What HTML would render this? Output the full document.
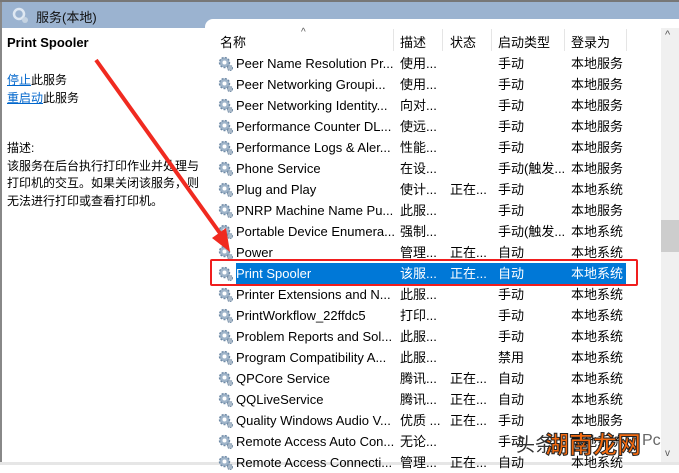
<!DOCTYPE html>
<html><head><meta charset="utf-8"><style>
*{margin:0;padding:0;box-sizing:border-box}
body{width:679px;height:465px;position:relative;overflow:hidden;background:#fff;font-family:"Liberation Sans","Noto Sans CJK SC",sans-serif;font-size:13px;color:#000}
.a{position:absolute;white-space:nowrap}
.row{position:absolute;left:210px;width:451px;height:21px;line-height:21px}
.row span{position:absolute;top:0}
.ic{position:absolute;left:8px;top:3px;width:15px;height:15px}
.c1{left:26px}.c2{left:190px}.c3{left:240px}.c4{left:288px}.c5{left:361px}
.sel{background:#0078d7;color:#fff}
</style></head><body>
<div class="a" style="left:0;top:0;width:679px;height:2px;background:#777"></div>
<div class="a" style="left:0;top:2px;width:679px;height:26px;background:#9bb3d0"></div>
<div class="a" style="left:0;top:2px;width:2px;height:463px;background:#888"></div>
<div class="a" style="left:2px;top:28px;width:203px;height:435px;background:#fff"></div>
<div class="a" style="left:205px;top:19px;width:474px;height:446px;background:#fff;border-top-left-radius:8px"></div>
<div class="a" style="left:0;top:462px;width:679px;height:3px;background:#e6e6e6"></div>
<svg class="a" style="left:12px;top:7px" width="18" height="18" viewBox="0 0 18 18"><circle cx="7" cy="7" r="5" fill="none" stroke="#dfe8f2" stroke-width="2.5"/><circle cx="13" cy="13" r="3" fill="#c5d3e2"/></svg>
<div class="a" style="left:36px;top:7px;font-size:13px;color:#111">服务(本地)</div>
<div class="a" style="left:7px;top:35px;font-weight:bold;font-size:13px">Print Spooler</div>
<div class="a" style="left:7px;top:71px;font-size:12px"><span style="color:#0066cc;text-decoration:underline">停止</span>此服务</div>
<div class="a" style="left:7px;top:89px;font-size:12px"><span style="color:#0066cc;text-decoration:underline">重启动</span>此服务</div>
<div class="a" style="left:7px;top:140px;font-size:12px;line-height:17.5px">描述:<br>该服务在后台执行打印作业并处理与<br>打印机的交互。如果关闭该服务，则<br>无法进行打印或查看打印机。</div>
<div class="a" style="left:220px;top:32px">名称</div>
<div class="a" style="left:301px;top:27px;font-size:10px;color:#555">^</div>
<div class="a" style="left:400px;top:32px">描述</div>
<div class="a" style="left:450px;top:32px">状态</div>
<div class="a" style="left:498px;top:32px">启动类型</div>
<div class="a" style="left:571px;top:32px">登录为</div>
<div class="a" style="left:393px;top:29px;width:1px;height:22px;background:#e5e5e5"></div>
<div class="a" style="left:442px;top:29px;width:1px;height:22px;background:#e5e5e5"></div>
<div class="a" style="left:491px;top:29px;width:1px;height:22px;background:#e5e5e5"></div>
<div class="a" style="left:564px;top:29px;width:1px;height:22px;background:#e5e5e5"></div>
<div class="a" style="left:626px;top:29px;width:1px;height:22px;background:#e5e5e5"></div>
<div class="a" style="left:661px;top:28px;width:18px;height:434px;background:#f0f0f0"></div>
<div class="a" style="left:661px;top:220px;width:18px;height:32px;background:#cdcdcd"></div>
<div class="a" style="left:665px;top:29px;font-size:11px;color:#555">^</div>
<div class="a" style="left:665px;top:448px;font-size:10px;color:#555">v</div>
<div id="rows"></div>
<script>
var d=[["Peer Name Resolution Pr...","使用...","","手动","本地服务"],["Peer Networking Groupi...","使用...","","手动","本地服务"],["Peer Networking Identity...","向对...","","手动","本地服务"],["Performance Counter DL...","使远...","","手动","本地服务"],["Performance Logs & Aler...","性能...","","手动","本地服务"],["Phone Service","在设...","","手动(触发...","本地服务"],["Plug and Play","使计...","正在...","手动","本地系统"],["PNRP Machine Name Pu...","此服...","","手动","本地服务"],["Portable Device Enumera...","强制...","","手动(触发...","本地系统"],["Power","管理...","正在...","自动","本地系统"],["Print Spooler","该服...","正在...","自动","本地系统"],["Printer Extensions and N...","此服...","","手动","本地系统"],["PrintWorkflow_22ffdc5","打印...","","手动","本地系统"],["Problem Reports and Sol...","此服...","","手动","本地系统"],["Program Compatibility A...","此服...","","禁用","本地系统"],["QPCore Service","腾讯...","正在...","自动","本地系统"],["QQLiveService","腾讯...","正在...","自动","本地系统"],["Quality Windows Audio V...","优质 ...","正在...","手动","本地服务"],["Remote Access Auto Con...","无论...","","手动","本地系统"],["Remote Access Connecti...","管理...","正在...","自动","本地系统"]];
var h="";
var ic='<svg class="ic" viewBox="0 0 15 15"><circle cx="6.5" cy="6.5" r="5" fill="#9fb4c9" stroke="#6f8aa6" stroke-width="1.4" stroke-dasharray="2 1.4"/><circle cx="6.5" cy="6.5" r="2" fill="#fff"/><circle cx="12" cy="12" r="2.6" fill="#a9b9c9" stroke="#7890a8" stroke-width="1" stroke-dasharray="1.5 1"/></svg>';
d.forEach(function(r,i){var s=i==10;h+='<div class="row" style="top:'+(53+21*i)+'px">'+(s?'<div style="position:absolute;left:26px;top:0;width:390px;height:21px;background:#0078d7"></div>':'')+ic+'<span class="c1"'+(s?' style="color:#fff"':'')+'>'+r[0].replace(/&/g,"&amp;")+'</span>'+[1,2,3,4].map(function(k){return '<span class="c'+(k+1)+'"'+(s?' style="color:#fff"':'')+'>'+r[k]+'</span>'}).join('')+'</div>';});
document.getElementById("rows").innerHTML=h;
</script>
<div class="a" style="left:210px;top:259px;width:428px;height:27px;border:2.5px solid #f01e1e;border-radius:2px"></div>
<svg class="a" style="left:0;top:0" width="679" height="465"><line x1="96" y1="60" x2="222" y2="236" stroke="#f02a20" stroke-width="4"/><polygon points="230,252 212,238 226,228" fill="#f02a20"/></svg>
<div class="a" style="left:516px;top:430px;font-size:19px;color:#333">头条</div>
<div class="a" style="left:545px;top:425px;font-size:24px;font-weight:bold;color:#f26a10;-webkit-text-stroke:1px #222">湖南龙网</div>
<div class="a" style="left:642px;top:432px;font-size:16px;color:#666">Pc</div>
</body></html>
